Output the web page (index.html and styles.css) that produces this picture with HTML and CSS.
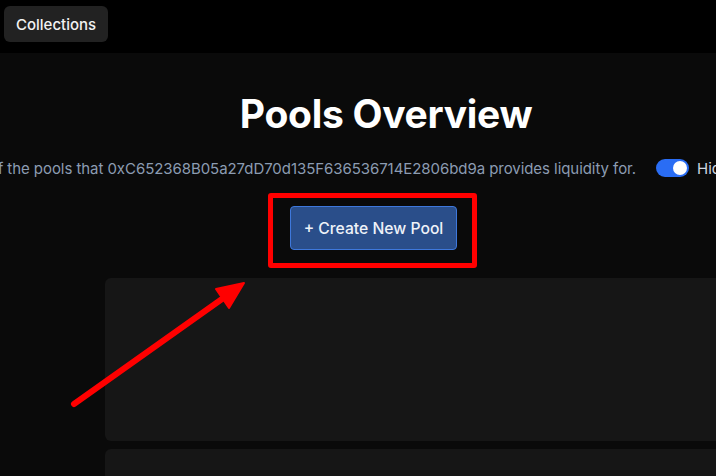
FILE: index.html
```html
<!DOCTYPE html>
<html>
<head>
<meta charset="utf-8">
<link rel="stylesheet" href="styles.css">
</head>
<body>
<header class="topbar">
  <button class="nav-btn">Collections</button>
</header>
<main class="main">
  <h1 class="title">Pools Overview</h1>
  <div class="subrow">
    <p class="subtitle">Here is a list of all of the pools that 0xC652368B05a27dD70d135F636536714E2806bd9a provides liquidity for.</p>
    <div class="filter">
      <span class="toggle"><span class="knob"></span></span>
      <span class="toggle-label">Hide empty pools</span>
    </div>
  </div>
  <div class="btnrow">
    <button class="create-btn">+ Create New Pool</button>
  </div>
  <section class="cards">
    <div class="card"></div>
    <div class="card"></div>
  </section>
</main>
<div class="annot-box"></div>
<svg class="annot-arrow" width="716" height="476" viewBox="0 0 716 476">
  <line x1="74" y1="404" x2="222" y2="299" stroke="#ff0000" stroke-width="6" stroke-linecap="round"/>
  <polygon points="244,283 216,289 229,308" fill="#ff0000" stroke="#ff0000" stroke-width="2" stroke-linejoin="round"/>
</svg>
</body>
</html>
```
FILE: styles.css
```css
html, body {
  margin: 0;
  padding: 0;
  background: #0a0a0a;
  overflow: hidden;
  width: 716px;
  height: 476px;
  font-family: Inter, "Noto Sans", sans-serif;
}
.topbar {
  height: 53px;
  background: #000;
  padding: 6px 4px 0;
  box-sizing: border-box;
}
.nav-btn {
  height: 36px;
  padding: 0 12px;
  background: #222222;
  color: #f2f2f2;
  border: none;
  border-radius: 6px;
  font-family: Inter, sans-serif;
  font-size: 15px;
  font-weight: 500;
}
.main {
  width: 772px;
  display: flex;
  flex-direction: column;
  align-items: center;
}
.title {
  margin: 40px 0 0;
  height: 42px;
  line-height: 42px;
  font-size: 39px;
  font-weight: 700;
  color: #ffffff;
  letter-spacing: -0.3px;
}
.subrow {
  margin-top: 23px;
  align-self: flex-start;
  width: 656px;
  height: 20px;
  display: flex;
  align-items: center;
  justify-content: flex-end;
  white-space: nowrap;
}
.subtitle {
  margin: 0;
  flex: none;
  font-size: 15px;
  letter-spacing: -0.06px;
  color: #8c9cb2;
}
.filter {
  flex: none;
  width: 0;
  margin-left: 20px;
  display: flex;
  align-items: center;
}
.toggle {
  flex: none;
  width: 33px;
  height: 18px;
  border-radius: 9px;
  background: #2a6df4;
  display: flex;
  align-items: center;
  justify-content: flex-end;
  padding: 0 2px;
  box-sizing: border-box;
}
.knob {
  width: 14px;
  height: 14px;
  border-radius: 50%;
  background: #fff;
}
.toggle-label {
  flex: none;
  margin-left: 8px;
  font-size: 15px;
  color: #cfd6e0;
}
.btnrow {
  margin-top: 28px;
  width: 772px;
  display: flex;
  padding-left: 290px;
  box-sizing: border-box;
}
.create-btn {
  width: 167px;
  height: 44px;
  background: #2a4e8a;
  border: 1px solid #3e78dc;
  border-radius: 4px;
  color: #eef2f8;
  font-family: Inter, sans-serif;
  font-size: 15.7px;
  font-weight: 500;
}
.cards {
  margin-top: 28px;
  width: 772px;
  padding-left: 105px;
  box-sizing: border-box;
  display: flex;
  flex-direction: column;
  gap: 8px;
}
.card {
  height: 163px;
  background: #161616;
  border-radius: 6px;
}
.annot-box {
  position: absolute;
  left: 268px;
  top: 193px;
  width: 209px;
  height: 75px;
  box-sizing: border-box;
  border: 5px solid #ff0000;
  border-radius: 3px;
}
.annot-arrow {
  position: absolute;
  left: 0;
  top: 0;
}
```
